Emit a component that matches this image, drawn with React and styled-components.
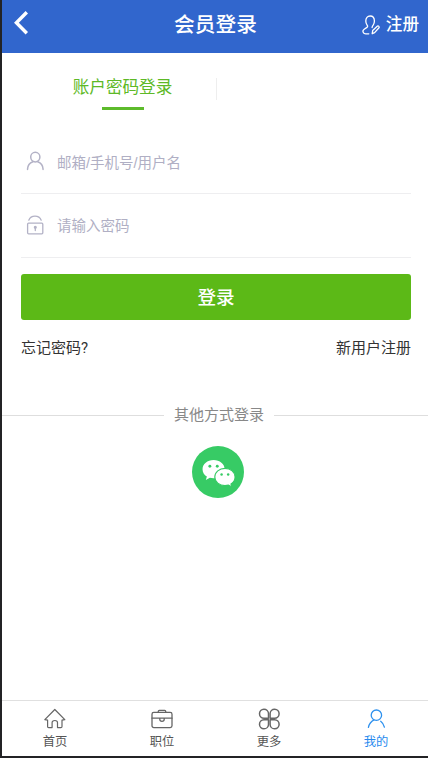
import React from "react";
import styled, { createGlobalStyle } from "styled-components";

const GlobalStyle = createGlobalStyle`
  * { box-sizing: border-box; }
  body {
    margin: 0;
    background: #fff;
    font-family: Roboto, "Noto Sans CJK SC", sans-serif;
  }
  button, input { font: inherit; }
`;

const Screen = styled.div`
  display: flex;
  flex-direction: column;
  width: 428px;
  height: 758px;
  overflow: hidden;
  border-left: 2px solid #232325;
  border-bottom: 2px solid #232325;
  background: #fff;
`;

const Header = styled.header`
  display: grid;
  grid-template-columns: 90px 1fr 90px;
  align-items: center;
  flex: none;
  height: 53px;
  padding: 0 9px 3px 10px;
  background: #3166cd;
  color: #fff;
`;

const BackButton = styled.button`
  display: flex;
  width: 20px;
  padding: 0 0 4px;
  border: 0;
  background: none;
  color: inherit;
`;

const Title = styled.h1`
  margin: 0;
  text-align: center;
  font-size: 20.7px;
  line-height: 30px;
  font-weight: 500;
  white-space: nowrap;
`;

const RegisterLink = styled.a`
  display: flex;
  align-items: center;
  justify-content: flex-end;
  gap: 5px;
  font-size: 16.6px;
  line-height: 24px;
  font-weight: 500;
  white-space: nowrap;
`;

const Main = styled.main`
  flex: 1;
`;

const Tabs = styled.nav`
  display: flex;
  height: 77px;
  padding: 20px 18px 0;
`;

const Tab = styled.div`
  display: flex;
  flex-direction: column;
  align-items: center;
  width: 197px;
  height: 38px;
  padding: 3px 0 0 8px;
  color: #5db926;
  font-size: 16.6px;
  line-height: 24px;
  white-space: nowrap;

  &::after {
    content: "";
    width: 42px;
    height: 3px;
    margin-top: 7px;
    background: #5dbb2b;
  }
`;

const TabDivider = styled.span`
  width: 1px;
  height: 22px;
  margin-top: 5px;
  margin-left: -1px;
  background: #eee;
`;

const Form = styled.form`
  display: flex;
  flex-direction: column;
  padding: 0 17px 0 19px;
`;

const Field = styled.label`
  display: flex;
  align-items: center;
  gap: 13px;
  height: 64px;
  padding-left: 2px;
  border-bottom: 1px solid #eeeef0;
  color: #b3b2c6;
`;

const Input = styled.input`
  flex: 1;
  min-width: 0;
  padding: ${(p) => p.$drop || 0}px 0 0;
  border: 0;
  outline: 0;
  background: none;
  color: #333;
  font-family: "Liberation Sans", "Noto Sans CJK SC", sans-serif;
  font-size: 14.5px;
  line-height: 22px;

  &::placeholder { color: #b0afc4; opacity: 1; }
`;

const SubmitButton = styled.button`
  height: 46px;
  margin-top: 16px;
  padding: 0;
  border: 0;
  border-radius: 3px;
  background: #5cb917;
  color: #fff;
  font-size: 18.6px;
  line-height: 48px;
  font-weight: 500;
`;

const Links = styled.div`
  display: flex;
  justify-content: space-between;
  margin-top: 17px;
  color: #333;
  font-size: 15px;
  line-height: 22px;
`;

const OtherMethods = styled.section`
  display: flex;
  flex-direction: column;
  align-items: center;
  margin-top: 45px;
`;

const OtherHeading = styled.h2`
  display: flex;
  align-items: center;
  gap: 10px;
  width: 100%;
  margin: 0;
  color: #888;
  font-size: 15px;
  line-height: 23px;
  font-weight: 400;

  &::before, &::after {
    content: "";
    height: 1px;
    background: #dedede;
  }
  &::before { width: 162px; }
  &::after { flex: 1; }
`;

const WechatButton = styled.button`
  display: flex;
  align-items: center;
  justify-content: center;
  width: 52px;
  height: 52px;
  margin: 19px 0 0 6px;
  padding: 2px 0 0 1px;
  border: 0;
  border-radius: 50%;
  background: #37cb65;
`;

const TabBar = styled.nav`
  display: grid;
  grid-template-columns: repeat(4, 107px);
  flex: none;
  height: 56px;
  border-top: 1px solid #e0e0e0;
`;

const TabBarItem = styled.a`
  display: flex;
  flex-direction: column;
  align-items: center;
  padding: 6px 1px 0 0;
  color: ${(p) => (p.$active ? "#2e91ee" : "#666")};

  span {
    margin-top: 1px;
    color: ${(p) => (p.$active ? "#2789ee" : "#555")};
    font-size: 12.3px;
    line-height: 21px;
  }
`;

const Icon = styled.svg`
  display: block;
  flex: none;
  fill: none;
  stroke: currentColor;
  stroke-width: ${(p) => p.$stroke || 1.2};
  stroke-linecap: round;
  stroke-linejoin: round;
`;

const BackIcon = () => (
  <Icon width="18" height="26" viewBox="0 0 18 26" $stroke={3.4}>
    <path d="M14.8 2.2 4.4 12.7 14.8 23.2" strokeLinecap="butt" strokeLinejoin="miter" />
  </Icon>
);

const UserEditIcon = () => (
  <Icon width="19" height="20" viewBox="0 0 19 20" $stroke={1.3}>
    <path d="M10.1 12.6c0-1.1.5-1.7 1.1-2.5.8-1.1 1.2-2.2 1.2-4C12.4 2.8 10.7 1 8.1 1S3.8 2.8 3.8 6.1c0 1.8.5 3 1.3 4 .7.9.8 1.7-.1 2.3l-2.8 1.8C1 15 .8 16.5 1.3 17.4c.4.9 1.3 1.4 2.5 1.4h3" />
    <path d="m10.2 18.7.5-3.2 4.8-4.4c.8-.7 2.3.8 1.5 1.7l-4.4 4.8z" />
  </Icon>
);

const UserIcon = () => (
  <Icon width="21" height="21" viewBox="0 0 21 21" $stroke={1.5}>
    <ellipse cx="12.3" cy="6.1" rx="4.6" ry="4.8" />
    <path d="M4.5 18.4c.2-4.3 2.2-6.6 5.4-7.6M14.7 10.8c3.2 1 5.2 3.3 5.4 7.6" />
  </Icon>
);

const LockIcon = () => (
  <Icon width="21" height="22" viewBox="0 0 21 22" $stroke={1.3}>
    <rect x="4.6" y="8.2" width="15.2" height="10.6" rx="1" />
    <path d="M5.8 5.2C6.8 2.7 9 1.2 12 1.2s5.2 1.5 6.2 4" />
    <circle cx="12.3" cy="12.2" r=".9" fill="currentColor" />
    <path d="M12.3 12.5v3" />
  </Icon>
);

const WechatIcon = () => (
  <svg width="35" height="29" viewBox="0 0 34 28">
    <path
      fill="#fff"
      d="M12.2 1C6.2 1 1.5 4.9 1.5 9.9c0 3 1.5 5.5 4.2 7.1l-1 3.3 3.9-2.1c1.1.3 2.3.5 3.6.5 6 0 10.8-3.9 10.8-8.8S18.2 1 12.2 1z"
    />
    <path
      fill="#fff"
      stroke="#37cb65"
      strokeWidth="1.1"
      d="M23.3 9c-5.5 0-9.9 3.7-9.9 8.4s4.4 8.4 9.9 8.4c1.2 0 2.3-.2 3.4-.5l3.2 1.7-.8-2.9c2.5-1.5 4-3.9 4-6.7 0-4.7-4.3-8.4-9.8-8.4z"
    />
    <g fill="#37cb65">
      <circle cx="8.6" cy="6.9" r="1.4" />
      <circle cx="15.8" cy="6.9" r="1.4" />
      <circle cx="20" cy="15" r="1.2" />
      <circle cx="26.4" cy="15" r="1.2" />
    </g>
  </svg>
);

const HomeIcon = () => (
  <Icon width="24" height="24" viewBox="0 0 24 24">
    <path d="M1.8 12.7 11.8 2.5l10 10.2-2.8.5v6.3c0 .7-.4 1.1-1.1 1.1h-3.4v-5c0-1.4-.8-2.1-2.6-2.1s-2.8.7-2.8 2.1v5H5.7c-.7 0-1.1-.4-1.1-1.1v-6.3z" />
  </Icon>
);

const BriefcaseIcon = () => (
  <Icon width="24" height="24" viewBox="0 0 24 24" $stroke={1.3}>
    <rect x="2" y="5.4" width="20" height="15.2" rx="1.8" />
    <path d="M8.3 5.4V4.2c0-.6.4-.9 1-.9h5.4c.6 0 1 .3 1 .9v1.2M2 11.2h7.8M14.2 11.2H22M9.8 11.2v1.4c0 1.1.9 1.8 2.2 1.8s2.2-.7 2.2-1.8v-1.4z" />
  </Icon>
);

const CloverIcon = () => (
  <Icon width="24" height="24" viewBox="0 0 24 24" $stroke={1.5}>
    <path d="M11.5 11.2V6.6a4.5 4.5 0 1 0-4.5 4.6z" />
    <path d="M13.1 11.2V6.6a4.5 4.5 0 1 1 4.5 4.6z" />
    <path d="M11.5 12.8v4.6a4.5 4.5 0 1 1-4.5-4.6z" />
    <path d="M13.1 12.8v4.6a4.5 4.5 0 1 0 4.5-4.6z" />
  </Icon>
);

const ProfileIcon = () => (
  <Icon width="24" height="24" viewBox="0 0 24 24" $stroke={1.3}>
    <circle cx="12.4" cy="8.2" r="5.2" />
    <path d="M4.4 20.3c.8-3.5 2.7-5.8 5.6-7.4M16.7 14.3c1.9 1.4 3.1 3.4 3.7 5.9" />
  </Icon>
);

const navItems = [
  { label: "首页", Glyph: HomeIcon },
  { label: "职位", Glyph: BriefcaseIcon },
  { label: "更多", Glyph: CloverIcon },
  { label: "我的", Glyph: ProfileIcon, active: true },
];

export default function App() {
  return (
    <>
      <GlobalStyle />
      <Screen>
        <Header>
          <BackButton type="button" aria-label="返回"><BackIcon /></BackButton>
          <Title>会员登录</Title>
          <RegisterLink><UserEditIcon />注册</RegisterLink>
        </Header>
        <Main>
          <Tabs>
            <Tab>账户密码登录</Tab>
            <TabDivider />
          </Tabs>
          <Form onSubmit={(e) => e.preventDefault()}>
            <Field>
              <UserIcon />
              <Input type="text" placeholder="邮箱/手机号/用户名" $drop={2} />
            </Field>
            <Field>
              <LockIcon />
              <Input type="password" placeholder="请输入密码" />
            </Field>
            <SubmitButton type="submit">登录</SubmitButton>
            <Links>
              <a>忘记密码?</a>
              <a>新用户注册</a>
            </Links>
          </Form>
          <OtherMethods>
            <OtherHeading>其他方式登录</OtherHeading>
            <WechatButton type="button" aria-label="微信登录"><WechatIcon /></WechatButton>
          </OtherMethods>
        </Main>
        <TabBar>
          {navItems.map(({ label, Glyph, active }) => (
            <TabBarItem key={label} $active={active}>
              <Glyph />
              <span>{label}</span>
            </TabBarItem>
          ))}
        </TabBar>
      </Screen>
    </>
  );
}
